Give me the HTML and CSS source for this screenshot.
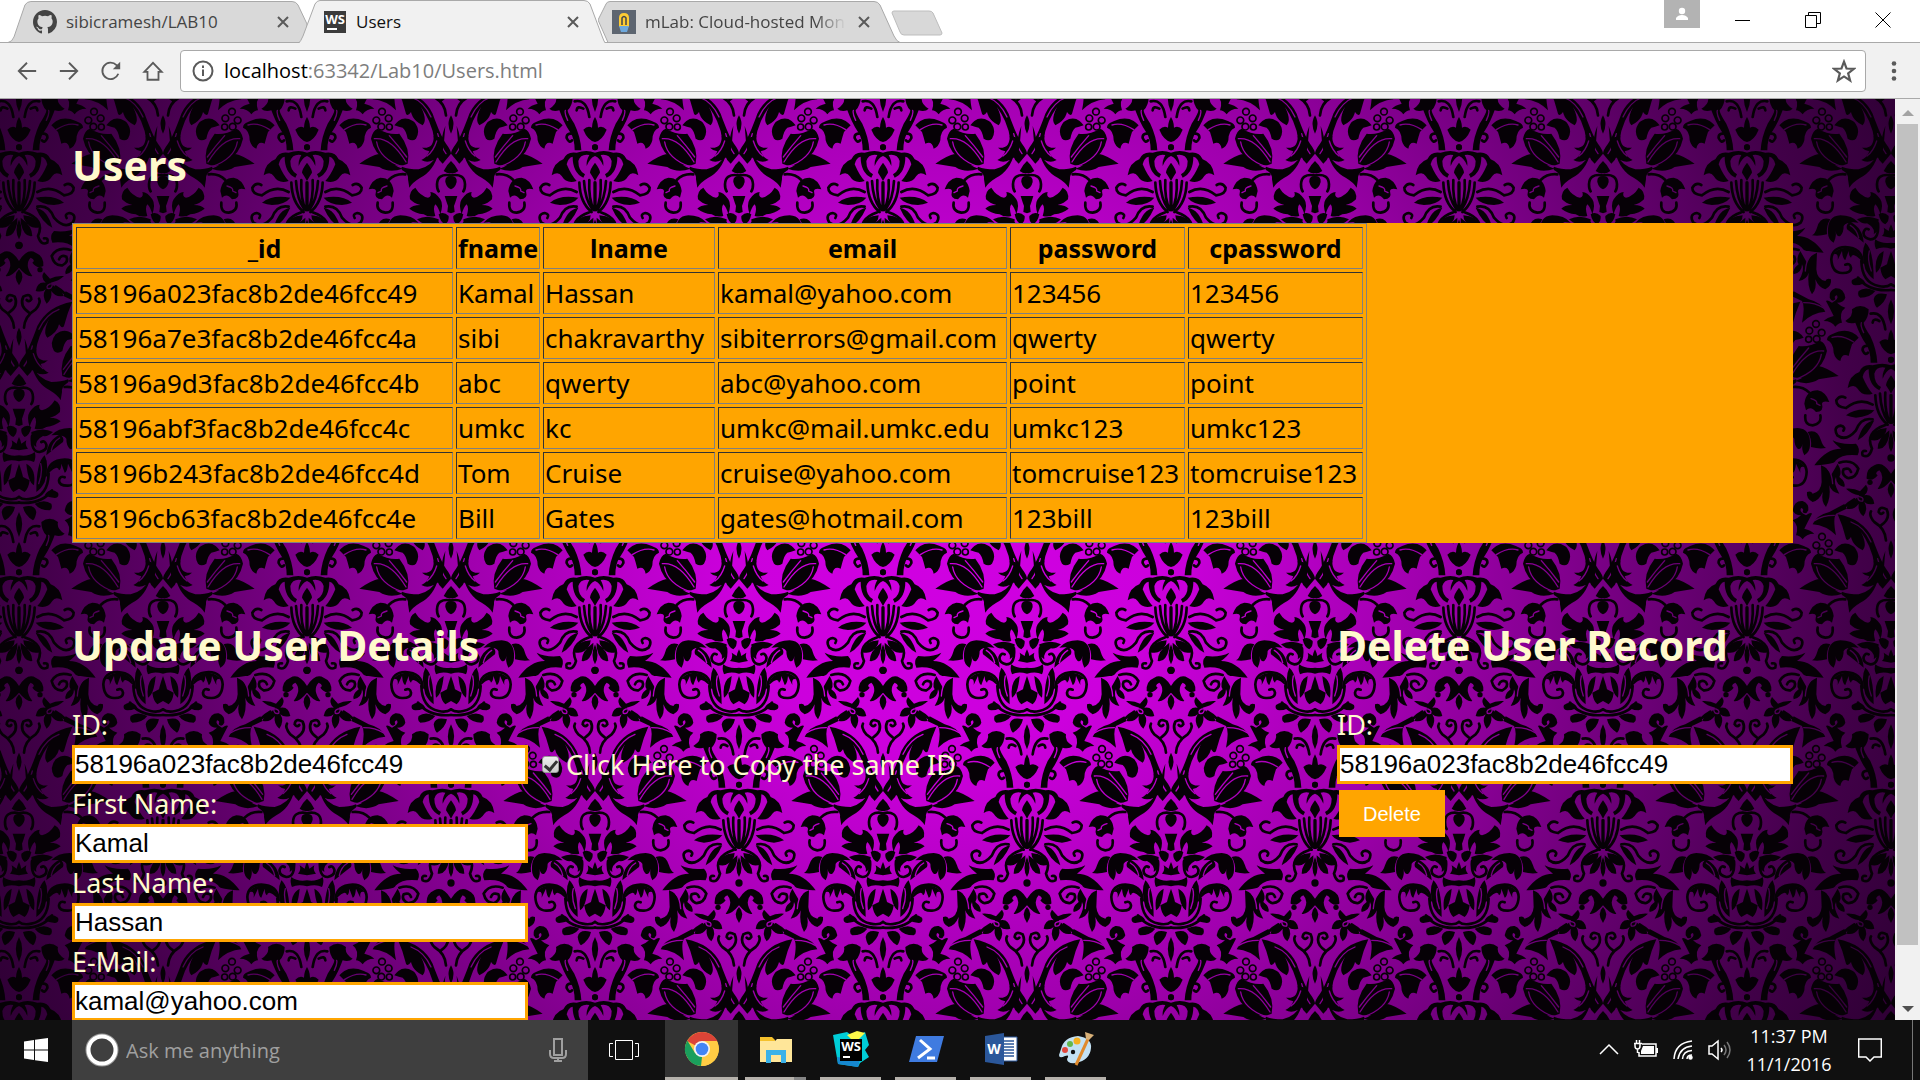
FILE: index.html
```html
<!DOCTYPE html>
<html lang="en">
<head>
<meta charset="utf-8">
<title>Users</title>
<link rel="stylesheet" href="styles.css">
</head>
<body>
<header class="tab-strip">
  <nav class="tabs" aria-label="Tabs">
    <div class="tab tab-first">
      <svg class="tab-shape" viewBox="0 0 300 43" preserveAspectRatio="none" aria-hidden="true"><path d="M0 42.500Q4 42 6 37L17 5Q19 1.500 23 1.500H285Q289 1.500 291 5L300 24V42.500Z"/></svg>
      <svg class="favicon" viewBox="0 0 16 16" aria-hidden="true"><path fill="#444" d="M8 0C3.580 0 0 3.580 0 8c0 3.540 2.290 6.530 5.470 7.590.4.070.55-.17.55-.38 0-.19-.01-.82-.01-1.490-2.010.37-2.530-.49-2.690-.94-.09-.23-.48-.94-.82-1.130-.28-.15-.68-.52-.01-.53.63-.01 1.080.58 1.230.82.72 1.210 1.870.87 2.330.66.07-.52.28-.87.51-1.070-1.780-.2-3.640-.89-3.640-3.950 0-.87.31-1.590.82-2.150-.08-.2-.36-1.020.08-2.120 0 0 .67-.21 2.200.82a7.600 7.600 0 0 1 4 0c1.530-1.040 2.200-.82 2.200-.82.44 1.100.16 1.920.08 2.120.51.56.82 1.270.82 2.150 0 3.070-1.870 3.750-3.650 3.950.29.25.54.73.54 1.480 0 1.070-.01 1.930-.01 2.200 0 .21.15.46.55.38A8 8 0 0 0 16 8c0-4.420-3.580-8-8-8z"/></svg>
      <a class="tab-title" href="#repo">sibicramesh/LAB10</a>
      <button class="tab-close" aria-label="Close tab"><svg viewBox="0 0 12 12"><path d="M1 1L11 11M11 1L1 11"/></svg></button>
    </div>
    <div class="tab tab-active">
      <svg class="tab-shape" viewBox="0 0 308 43" preserveAspectRatio="none" aria-hidden="true"><path d="M0 44Q3 41 5 36L17 4Q19 .500 22 .500H286Q290 .500 292 4L304 36Q306 42 308 44"/></svg>
      <svg class="favicon" viewBox="0 0 24 24" aria-hidden="true"><path fill="#3b3b3b" d="M1 1H23V23H1Z"/><text class="logo-text" x="12" y="14" font-size="13">WS</text><path fill="#fff" d="M4 18H14V20H4Z"/></svg>
      <a class="tab-title" href="#users">Users</a>
      <button class="tab-close" aria-label="Close tab"><svg viewBox="0 0 12 12"><path d="M1 1L11 11M11 1L1 11"/></svg></button>
    </div>
    <div class="tab tab-last">
      <svg class="tab-shape" viewBox="0 0 302 43" preserveAspectRatio="none" aria-hidden="true"><path d="M0 20L8 4Q9 1.500 12 1.500H276Q280 1.500 282 5L296 36Q299 42 302 42.500H10Z"/></svg>
      <svg class="favicon" viewBox="0 0 24 24" aria-hidden="true"><path fill="#5d6570" d="M0 0H24V24H0Z"/><path fill="#fc3" d="M7 17V8Q7 3 12 3T17 8V17Z"/><path fill="#6da8dc" d="M7 16H17L15 22H9Z"/><path fill="none" stroke="#43464c" stroke-width="1.500" d="M10 15V8Q12 5 14 8V15"/></svg>
      <a class="tab-title tab-fade" href="#mlab">mLab: Cloud-hosted Mon</a>
      <button class="tab-close" aria-label="Close tab"><svg viewBox="0 0 12 12"><path d="M1 1L11 11M11 1L1 11"/></svg></button>
    </div>
    <button class="new-tab" aria-label="New tab"><svg viewBox="0 0 52 26"><path d="M3 1H38Q41 1 42 3L51 23Q51 25 49 25H13Q10 25 9 22L1 3Q1 1 3 1Z" fill="#d8d8d8" stroke="#bdbdbd"/></svg></button>
  </nav>
  <div class="window-controls">
    <button class="profile" aria-label="Profile"><svg viewBox="0 0 14 14"><circle cx="7" cy="4" r="3.200"/><path d="M1 13V11Q3 8 7 8T13 11V13Z"/></svg></button>
    <button class="win" aria-label="Minimize"><svg viewBox="0 0 16 16"><path d="M0 8.500H15"/></svg></button>
    <button class="win" aria-label="Restore"><svg viewBox="0 0 16 16"><path d="M.500 3.500H11.500V15.500H.500ZM3.500 3V.500H15.500V11.500H12"/></svg></button>
    <button class="win" aria-label="Close"><svg viewBox="0 0 16 16"><path d="M.500.500L15.500 15.500M15.500.500L.500 15.500"/></svg></button>
  </div>
</header>
<div class="toolbar">
  <button class="tool" aria-label="Back"><svg viewBox="0 0 24 24"><path d="M22 12H3M12 3L3 12L12 21"/></svg></button>
  <button class="tool" aria-label="Forward"><svg viewBox="0 0 24 24"><path d="M2 12H21M12 3L21 12L12 21"/></svg></button>
  <button class="tool" aria-label="Reload"><svg viewBox="0 0 24 24"><path d="M20 15A9 9 0 1 1 18 5.500L21 8"/><path fill="#5a5a5a" stroke="none" d="M22 2V10H14Z"/></svg></button>
  <button class="tool" aria-label="Home"><svg viewBox="0 0 24 24"><path d="M2.500 13L12 3L21.500 13H18V21.500H6V13Z"/></svg></button>
  <div class="address">
    <svg class="info" viewBox="0 0 22 22" aria-hidden="true"><circle cx="11" cy="11" r="9.500"/><path d="M11 9.500V16M11 5.500V8"/></svg>
    <div class="url" role="textbox" aria-label="Address" contenteditable="true" spellcheck="false"><span class="host">localhost</span>:63342/Lab10/Users.html</div>
    <button class="star" aria-label="Bookmark"><svg viewBox="0 0 22 22"><path d="M11 2.500L13.300 8.700L20 9L14.800 13.200L16.600 19.700L11 16L5.400 19.700L7.200 13.200L2 9L8.700 8.700Z"/></svg></button>
  </div>
  <button class="menu" aria-label="Menu"><svg viewBox="0 0 6 20"><circle cx="3" cy="2.500" r="2.300"/><circle cx="3" cy="10" r="2.300"/><circle cx="3" cy="17.500" r="2.300"/></svg></button>
</div>

<div class="viewport">
  <main class="page">
    <svg class="damask" aria-hidden="true">
      <defs>
        <g id="half" transform="translate(-23 45)" stroke-linecap="round">
          <g stroke="none">
            <path d="M23 75Q35 85 45 105Q34 114 23 112ZM23 120Q42 120 40 138Q36 155 23 160ZM23 180L42 180Q36 200 32 210L34 228L23 232Z"/>
            <path d="M55 235Q45 205 55 190Q70 168 85 168Q80 182 92 185Q115 180 130 155Q150 165 146 190Q135 202 115 207Q140 208 148 218Q130 232 105 235Q90 245 70 240Q78 215 70 205Q60 215 55 235ZM30 240Q45 225 60 235Q55 260 40 265Q28 255 30 240Z"/>
            <path d="M60 250Q95 235 125 250Q110 265 95 262Q70 275 75 295L62 285ZM23 265Q28 275 30 285L45 275Q40 290 50 300L23 305ZM23 320Q50 325 70 310Q75 325 68 340Q50 330 23 338Z"/>
            <path d="M105 320Q108 275 145 258Q160 265 155 280Q135 295 105 320ZM120 260Q140 238 175 238Q215 240 212 290Q212 310 195 320Q185 300 190 285Q185 305 175 300Q165 290 165 270Q155 255 120 260ZM205 250Q235 240 245 275Q250 292 260 298Q240 302 215 295Q218 270 205 250Z"/>
            <path d="M110 375Q120 335 160 335Q190 340 195 355Q180 350 183 372L170 345Q168 370 160 372L150 345Q150 360 143 365Q140 345 110 375ZM23 345Q32 370 35 385L55 395Q52 420 40 430L23 420ZM45 345Q75 360 68 410Q50 400 45 345ZM75 430Q75 340 100 320Q115 350 100 400Q90 420 75 430Z"/>
            <path d="M100 440Q115 415 140 432Q145 445 130 448Q115 448 100 440ZM70 465Q100 450 120 465Q125 480 115 485Q85 485 70 465ZM35 475Q70 465 75 490Q72 510 65 515Q40 500 35 475ZM23 490Q42 525 23 565ZM23 580Q32 595 32 612Q45 605 58 618Q45 650 23 655Z"/>
            <circle cx="23" cy="671" r="9"/>
            <path d="M64 680Q66 640 85 600Q105 570 105 560Q90 545 90 520Q115 500 140 520Q135 540 160 555Q150 565 130 560Q115 600 98 625Q84 645 84 680Z"/>
            <path d="M160 485Q165 455 190 457Q210 465 207 485Q200 500 190 490Q195 480 185 478Q178 490 200 500Q215 490 218 495Q205 520 195 540Q215 545 225 555Q200 555 190 572Q180 560 170 560Q180 530 160 515Q175 510 185 500Q165 500 160 485Z"/>
            <path d="M60 50Q80 90 120 100Q150 100 170 92Q175 100 165 105Q150 115 152 130L148 155Q140 140 115 125Q75 105 60 50ZM40 -30Q48 -10 50 5L75 0Q74 40 110 35Q100 45 88 46Q95 65 112 72Q95 82 75 72Q48 60 45 30Z"/>
            <path d="M120 605Q150 570 200 595Q215 600 215 612Q195 620 195 650Q190 670 175 675Q170 650 150 660Q145 640 140 625Q130 615 120 605ZM285 605Q310 570 345 595Q365 620 350 645Q340 655 325 645Q320 620 310 612Q300 610 285 605Z"/>
            <path d="M215 645Q220 620 235 615Q270 635 300 630Q335 675 325 720Q290 735 260 710Q225 690 215 645ZM180 720Q215 695 240 690Q280 725 310 735Q270 750 240 730Z"/>
            <path d="M220 527Q230 500 270 490L315 466L322 480L290 495Q280 510 290 560Q260 530 220 527ZM295 497Q370 510 400 570Q425 640 440 660Q455 680 455 690L430 720Q405 700 405 650Q400 600 365 550Q385 590 370 605Q340 590 335 565Q325 580 320 570Q310 530 295 497Z"/>
            <path d="M455 50Q430 40 400 50Q370 45 360 70Q330 80 325 118Q345 105 355 120Q370 145 400 135Q385 120 370 85Q374 65 388 62Q388 110 420 125L425 115Q405 105 405 75Q412 52 438 57Q428 75 430 90Q440 65 455 60ZM455 80Q440 100 440 110Q450 125 455 135Z"/>
            <path d="M320 200Q350 175 405 185Q390 205 350 207Q335 205 320 200ZM405 215Q370 220 355 275Q385 260 405 215ZM442 238Q400 240 390 272Q420 285 440 250ZM450 245Q415 270 415 300Q440 305 450 260ZM455 250Q440 285 455 310Z"/>
            <circle cx="455" cy="328" r="11"/><circle cx="392" cy="401" r="8"/>
            <path d="M455 375Q430 335 405 350Q380 360 382 390Q400 400 415 380Q404 372 420 365Q440 385 415 420Q430 425 455 395ZM455 400Q435 420 455 448ZM455 575Q440 600 455 630Z"/>
            <path d="M225 350Q260 300 305 300Q285 285 280 275Q310 290 350 285Q365 300 355 320Q310 315 290 335Q285 345 270 345Q240 350 225 350ZM245 350Q270 360 275 380L295 345Q310 370 300 385Q320 400 315 415Q290 410 290 385Q280 400 300 435Q275 430 270 410Q275 450 260 475Q245 460 250 430Q240 455 220 460Q200 450 203 430Q215 425 220 435Q245 430 247 400Z"/>
            <path d="M195 165Q200 125 235 125Q260 130 270 160Q250 155 248 165Q255 190 230 190Q215 170 200 185Z"/>
            <path d="M360 440Q335 435 320 420Q345 418 362 428L380 408Q392 425 375 440Q400 435 405 465Q385 470 375 460Q388 480 372 503Q355 490 358 465Q345 485 322 480Q325 455 345 455Z"/>
          </g>
          <g fill="none" stroke="#fff" stroke-width="8">
            <path d="M25 118Q64 112 65 145Q65 160 60 166M62 262Q58 310 85 310Q108 305 105 288Q100 274 90 280M108 380Q110 335 160 333Q200 335 202 370Q200 410 170 411Q143 412 143 395Q146 380 160 386M112 375Q110 440 60 450Q35 455 23 445M23 462Q90 468 122 425M40 580Q48 525 84 533M58 555Q76 545 78 560M80 630Q110 625 108 643Q100 660 92 650"/>
            <path d="M408 140Q410 200 445 228M422 135Q425 190 447 220M438 132Q435 190 452 222M454 140L454 222M400 168Q360 145 320 178Q290 175 291 155Q302 138 318 147M400 212Q365 205 350 245Q320 280 294 260Q280 235 304 231Q320 235 312 246M440 228Q375 250 398 300Q390 330 370 320Q365 305 380 307"/>
            <path d="M300 342Q340 330 357 360Q350 390 325 388Q305 378 313 362Q330 355 335 370M440 575Q438 540 405 520Q388 500 395 488M425 530Q455 510 442 482Q420 470 418 490Q425 500 432 492M160 115Q190 112 210 132M198 200Q195 230 220 230Q248 225 243 200M315 475Q330 460 345 452"/>
            <g stroke-width="5"><circle cx="248" cy="564" r="10"/><circle cx="231" cy="590" r="10"/><circle cx="268" cy="584" r="10"/><circle cx="246" cy="609" r="10"/><circle cx="270" cy="610" r="9"/></g>
          </g>
          <g fill="none" stroke="#000" stroke-width="4">
            <path d="M225 645Q275 640 320 715M232 655Q240 705 310 730M270 636Q300 670 322 700M120 305Q125 280 145 268M225 516Q250 500 285 500M335 520Q375 535 395 580M415 630Q425 670 440 690M105 590Q115 570 112 560M135 618Q170 595 200 604M265 360Q278 375 280 405M355 443Q375 445 370 457Q355 460 355 443M215 150Q235 155 232 165L242 170M95 60Q75 45 66 15M88 345Q95 370 82 405"/>
          </g>
        </g>
        <g id="motif"><use href="#half"/><use href="#half" transform="scale(-1 1)"/></g>
        <pattern id="weave" width="864" height="1275" patternUnits="userSpaceOnUse" patternTransform="translate(163 22) scale(.33333)" fill="#fff">
          <use href="#motif" y="-1275"/><use href="#motif" x="864" y="-1275"/>
          <use href="#motif" x="432" y="-637"/>
          <use href="#motif"/><use href="#motif" x="864"/>
          <use href="#motif" x="432" y="638"/>
          <use href="#motif" y="1275"/><use href="#motif" x="864" y="1275"/>
        </pattern>
        <mask id="ink"><rect width="100%" height="100%" fill="url(#weave)"/></mask>
      </defs>
      <rect width="100%" height="100%" fill="#060106" mask="url(#ink)"/>
    </svg>
    <div class="content">
      <h1>Users</h1>
      <div class="table-panel">
        <table>
          <colgroup><col class="c-id"><col class="c-fname"><col class="c-lname"><col class="c-email"><col class="c-pass"><col class="c-pass"></colgroup>
          <thead><tr><th>_id</th><th>fname</th><th>lname</th><th>email</th><th>password</th><th>cpassword</th></tr></thead>
          <tbody>
            <tr><td>58196a023fac8b2de46fcc49</td><td>Kamal</td><td>Hassan</td><td>kamal@yahoo.com</td><td>123456</td><td>123456</td></tr>
            <tr><td>58196a7e3fac8b2de46fcc4a</td><td>sibi</td><td>chakravarthy</td><td>sibiterrors@gmail.com</td><td>qwerty</td><td>qwerty</td></tr>
            <tr><td>58196a9d3fac8b2de46fcc4b</td><td>abc</td><td>qwerty</td><td>abc@yahoo.com</td><td>point</td><td>point</td></tr>
            <tr><td>58196abf3fac8b2de46fcc4c</td><td>umkc</td><td>kc</td><td>umkc@mail.umkc.edu</td><td>umkc123</td><td>umkc123</td></tr>
            <tr><td>58196b243fac8b2de46fcc4d</td><td>Tom</td><td>Cruise</td><td>cruise@yahoo.com</td><td>tomcruise123</td><td>tomcruise123</td></tr>
            <tr><td>58196cb63fac8b2de46fcc4e</td><td>Bill</td><td>Gates</td><td>gates@hotmail.com</td><td>123bill</td><td>123bill</td></tr>
          </tbody>
        </table>
      </div>
      <div class="forms">
        <form class="form">
          <h2>Update User Details</h2>
          <label for="uid">ID:</label>
          <div class="row">
            <input class="field" id="uid" type="text" value="58196a023fac8b2de46fcc49">
            <input class="check" id="same" type="checkbox" checked><label for="same">Click Here to Copy the same ID</label>
          </div>
          <label for="first">First Name:</label>
          <input class="field" id="first" type="text" value="Kamal">
          <label for="last">Last Name:</label>
          <input class="field" id="last" type="text" value="Hassan">
          <label for="mail">E-Mail:</label>
          <input class="field" id="mail" type="text" value="kamal@yahoo.com">
        </form>
        <form class="form">
          <h2>Delete User Record</h2>
          <label for="did">ID:</label>
          <input class="field" id="did" type="text" value="58196a023fac8b2de46fcc49">
          <button class="delete" type="button">Delete</button>
        </form>
      </div>
    </div>
  </main>
  <div class="scrollbar" aria-hidden="true">
    <svg viewBox="0 0 12 6"><path fill="#a3a3a3" d="M6 0L12 6H0Z"/></svg>
    <div class="thumb"></div>
    <svg viewBox="0 0 12 6"><path fill="#505050" d="M0 0H12L6 6Z"/></svg>
  </div>
</div>

<footer class="taskbar">
  <button class="start" aria-label="Start"><svg viewBox="0 0 24 24"><path fill="#fff" d="M0 3.500L10 2V11.500H0ZM11 1.800L24 0V11.500H11ZM0 12.500H10V22L0 20.500ZM11 12.500H24V24L11 22.200Z"/></svg></button>
  <div class="search">
    <svg class="ring" viewBox="0 0 34 34" aria-hidden="true"><circle cx="17" cy="17" r="15.500" stroke="#999" stroke-width="2"/><circle cx="17" cy="17" r="13.500" stroke="#fff" stroke-width="4"/></svg>
    <input type="text" placeholder="Ask me anything" aria-label="Search">
    <svg class="mic" viewBox="0 0 18 24" aria-hidden="true"><path d="M5 1H13V17H5ZM1 12V16Q1 20 5 20H13Q17 20 17 16V12M9 20V23M5 23H13"/></svg>
  </div>
  <button class="taskview" aria-label="Task view"><svg viewBox="0 0 30 20"><path d="M6.500.500H23.500V19.500H6.500ZM4 3.500H.500V16.500H4M26 3.500H29.500V16.500H26"/></svg></button>
  <nav class="apps" aria-label="Running apps">
    <button class="app app-current" aria-label="Chrome"><svg viewBox="0 0 36 36"><circle cx="18" cy="18" r="17" fill="#fc4"/><path fill="#db4437" d="M18 18L3 10Q9 1 18 1Q28 1 33.500 10H18Z"/><path fill="#1a9f5c" d="M3.300 9.500L11 22L18 26L17 35Q7 35 2 24Q-1 17 3.300 9.500Z"/><path fill="#fc4" d="M18 10H33Q37 20 31 29Q25 35 17 35L25 22Z"/><circle cx="18" cy="18" r="8" fill="#f4f4f4"/><circle cx="18" cy="18" r="6.300" fill="#4285f4"/></svg></button>
    <button class="app app-multi" aria-label="File Explorer"><svg viewBox="0 0 36 36"><path fill="#f5c12c" d="M2 6H14L17 9V14H2Z"/><path fill="#ffe699" d="M2 10H17L19 8H34V31H2Z"/><path fill="#3bb2e8" d="M8 19H28V32H23V24H13V32H8Z"/></svg></button>
    <button class="app" aria-label="WebStorm"><svg viewBox="0 0 36 36"><path fill="#00cdd7" d="M0 4L14 1L21 6L32 1L36 14L32 19L36 26L27 32L25 36L5 33Z"/><path fill="#fcf84a" d="M14 4L24 0L32 2L22 12Z"/><path fill="#1687cf" d="M4 26L27 29L25 36L5 33Z"/><path fill="#000" d="M7 8H29V30H7Z"/><text class="logo-text" x="18" y="20" font-size="13">WS</text><path fill="#fff" d="M10 25H17V27H10Z"/></svg></button>
    <button class="app" aria-label="PowerShell"><svg viewBox="0 0 36 36"><path fill="#3f7be0" d="M8 5H36L29 31H1Z"/><path fill="none" stroke="#fff" stroke-width="3" d="M12 9L22 18L10 27M19 27H27"/></svg></button>
    <button class="app" aria-label="Word"><svg viewBox="0 0 36 36"><path fill="#fff" stroke="#2b579a" d="M18 6H34V30H18Z"/><path fill="none" stroke="#2b579a" stroke-width="1.500" d="M20 10H31M20 13H31M20 16H31M20 19H31M20 22H31M20 25H31"/><path fill="#2b579a" d="M2 5L21 2V34L2 31Z"/><text class="logo-text" x="11" y="23" font-size="14">W</text></svg></button>
    <button class="app" aria-label="Paint"><svg viewBox="0 0 36 36"><path fill="#c3e1f3" d="M3 18Q6 6 20 5Q34 7 33 17Q32 29 18 32Q9 33 9 28Q12 23 7 25Q1 28 1 24Z"/><circle cx="7" cy="19" r="3" fill="#e0483e"/><circle cx="12" cy="13" r="3" fill="#63b84c"/><circle cx="19" cy="10" r="3.500" fill="#f5b020"/><circle cx="15" cy="21" r="2.200" fill="#111"/><path fill="none" stroke="#e08a2c" stroke-width="3" d="M18 34L30 8"/><path fill="#d8b078" d="M27 1L36 4L31 9L28 8Z"/></svg></button>
  </nav>
  <div class="tray">
    <button aria-label="Hidden icons"><svg class="i20" viewBox="0 0 20 20"><path d="M1 14L10 5L19 14"/></svg></button>
    <svg class="i24" viewBox="0 0 24 24" aria-hidden="true"><path d="M8 6H22V18H5V14M1 5V8Q1 11 3.500 11T6 8V5M0 5.500H8M2.500 2V5M5.500 2V5M3.500 11V15M23.500 10V15"/><path fill="#fff" stroke="none" d="M9 8H20V16H7V13Z"/></svg>
    <svg class="i20" viewBox="0 0 20 20" aria-hidden="true"><path d="M1 19Q2 3 19 1M5 19Q7 7 19 6M9.500 19Q10 11 19 10.500M14 19Q14 15 19 15"/><circle cx="17.500" cy="17.500" r="1.500" fill="#fff"/></svg>
    <svg class="i24" viewBox="0 0 24 24" aria-hidden="true"><path d="M1 8H4L10 3V21L4 16H1ZM13 10Q15 12 13 14"/><path stroke="#777" d="M16 7Q20 12 16 17M19 4Q25 12 19 20"/></svg>
    <div class="clock"><time>11:37 PM</time><time>11/1/2016</time></div>
    <button aria-label="Action center"><svg class="i24" viewBox="0 0 24 24"><path d="M.700 1H23.300V19H16L12 23L8 19H.700Z"/></svg></button>
    <div class="peek"></div>
  </div>
</footer>
</body>
</html>
```
FILE: styles.css
```css
* { box-sizing: border-box; }
body {
  margin: 0;
  height: 100vh;
  display: flex;
  flex-direction: column;
  overflow: hidden;
  background: #fff;
  font-family: "Segoe UI", "Open Sans", sans-serif;
}
button { border: 0; padding: 0; margin: 0; background: none; font: inherit; display: flex; align-items: center; justify-content: center; }
svg { display: block; flex: none; }
.logo-text { fill: #fff; font-family: "Open Sans", sans-serif; font-weight: 700; text-anchor: middle; }

/* Browser tabs */
.tab-strip { flex: none; height: 43px; display: flex; justify-content: space-between; border-bottom: 1px solid #a9a9a9; }
.tabs { display: flex; padding-left: 8px; }
.tab { position: relative; isolation: isolate; height: 43px; display: flex; align-items: center; padding: 0 18px 0 25px; }
.tab-first { width: 299px; }
.tab-active { width: 308px; margin-left: -9px; z-index: 1; padding: 0 27px 0 25px; }
.tab-last { width: 302px; margin-left: -8px; padding: 0 30px 0 14px; }
.tab-shape { position: absolute; left: 0; top: 0; width: 100%; height: 43px; fill: #d9d9d9; stroke: #a9a9a9; z-index: -1; }
.tab-active .tab-shape { fill: #f1f1f1; }
.favicon { width: 24px; height: 24px; }
.tab-title { flex: 1; margin-left: 9px; font-size: 17px; line-height: 24px; color: #444; text-decoration: none; white-space: nowrap; overflow: hidden; }
.tab-active .tab-title { color: #111; }
.tab-fade { margin-right: 12px; -webkit-mask-image: linear-gradient(to right, #000 85%, transparent); mask-image: linear-gradient(to right, #000 85%, transparent); }
.tab-close svg { width: 12px; height: 12px; fill: none; stroke: #5a5a5a; stroke-width: 2; }
.new-tab { align-self: flex-start; margin: 10px 0 0 -9px; }
.new-tab svg { width: 52px; height: 26px; }
.window-controls { display: flex; align-items: flex-start; padding-right: 2px; }
.profile { width: 36px; height: 28px; background: #b3b3b3; }
.profile svg { width: 14px; height: 14px; fill: #fff; }
.win { width: 70px; height: 40px; }
.win svg { width: 16px; height: 16px; fill: none; stroke: #000; }
.profile + .win { margin-left: 8px; }

/* Address toolbar */
.toolbar { flex: none; height: 56px; display: flex; align-items: center; background: #f1f1f1; border-bottom: 1px solid #a9a9a9; padding: 0 18px 0 6px; }
.tool { width: 42px; height: 42px; }
.tool svg { width: 22px; height: 22px; fill: none; stroke: #5a5a5a; stroke-width: 2; }
.address { flex: 1; height: 42px; margin-left: 6px; display: flex; align-items: center; background: #fff; border: 1px solid #a9a9a9; border-radius: 4px; padding: 0 9px 0 11px; }
.info { width: 22px; height: 22px; fill: none; stroke: #5a5a5a; stroke-width: 2; }
.url { flex: 1; margin-left: 10px; font-size: 20px; line-height: 28px; color: #7d7d7d; outline: none; }
.host { color: #000; }
.star svg { width: 24px; height: 24px; fill: none; stroke: #5a5a5a; stroke-width: 2; }
.menu { margin-left: 20px; width: 16px; }
.menu svg { width: 6px; height: 20px; fill: #5a5a5a; }

/* Document */
.viewport { flex: 1; min-height: 0; display: flex; overflow: hidden; }
.page {
  flex: 1;
  min-width: 0;
  position: relative;
  overflow: hidden;
  background: radial-gradient(circle at 50% 48%, #d000e2 0%, #cc00dd 20%, #a000ae 45%, #6a0075 68%, #420049 86%, #2e0034 100%);
  color: #fffacd;
  font-family: "Comic Sans MS", "Noto Sans", sans-serif;
  font-size: 27px;
  line-height: 40px;
}
.damask { position: absolute; left: 0; top: 0; width: 100%; height: 100%; }
.content { position: relative; padding: 38px 102px 0 72px; }
h1, h2 { margin: 0; font-size: 41px; line-height: 56px; font-weight: 700; white-space: nowrap; }
.table-panel { margin-top: 30px; background: orange; color: #000; font-size: 26px; }
table { table-layout: fixed; width: 1295px; border: 1px solid gray; border-collapse: separate; border-spacing: 3px; }
th, td { height: 42px; padding: 1px; border: 1px solid; border-color: #333 gray gray #333; line-height: 38px; white-space: nowrap; text-align: left; }
th { text-align: center; font-size: 25px; }
.c-id { width: 377px; }
.c-fname { width: 84px; }
.c-lname { width: 172px; }
.c-email { width: 289px; }
.c-pass { width: 175px; }
.forms { margin-top: 74px; display: flex; justify-content: space-between; }
.form { display: flex; flex-direction: column; align-items: flex-start; }
.form h2 { margin-bottom: 32px; }
.row { display: flex; align-items: center; }
.row label { margin-left: 7px; line-height: 39px; }
.field { width: 456px; height: 39px; border: 3px solid orange; background: #fff; color: #000; padding: 0; font: 26px/33px "Liberation Sans", Arial, sans-serif; }
.check { appearance: none; width: 17px; height: 17px; margin: 0 0 0 14px; border: 1px solid #999; border-radius: 3px; background: linear-gradient(#eee, #ccc); display: grid; place-items: center; }
.check:checked::before { content: ""; width: 5px; height: 10px; border: solid #333; border-width: 0 3px 3px 0; transform: rotate(40deg); }
.delete { margin: 6px 0 0 2px; padding: 0 24px; height: 47px; background: orange; color: #fff; font: 20px/24px "Liberation Sans", Arial, sans-serif; }
.scrollbar { flex: none; width: 25px; background: #f1f1f1; display: flex; flex-direction: column; align-items: center; padding: 11px 0 8px; }
.scrollbar svg { width: 12px; height: 6px; }
.thumb { width: 21px; flex: 0 0 91%; margin: 8px 0 auto; background: #c1c1c1; }

/* Taskbar */
.taskbar { flex: none; height: 60px; display: flex; background: #101010; color: #fff; }
.start { width: 72px; }
.start svg { width: 24px; height: 24px; }
.search { width: 516px; background: #3f3f3f; display: flex; align-items: center; padding: 0 21px 0 13px; }
.ring { width: 34px; height: 34px; fill: none; }
.search input { flex: 1; min-width: 0; border: 0; padding: 2px 0 0; margin-left: 7px; background: none; color: #fff; font: 20px/28px "Segoe UI", "Open Sans", sans-serif; }
.search input::placeholder { color: #a0a0a0; opacity: 1; }
.mic { width: 18px; height: 24px; fill: none; stroke: #a0a0a0; stroke-width: 2; }
.taskview { width: 72px; }
.taskview svg { width: 30px; height: 20px; fill: none; stroke: #fff; }
.apps { display: flex; padding-left: 5px; }
.app { width: 61px; margin: 0 7px; border-bottom: 3px solid #b5b1ab; }
.app svg { width: 36px; height: 36px; }
.app-current { width: 73px; margin: 0; background: #333; }
.app-multi { border-image: linear-gradient(to right, #b5b1ab 78%, #858585 78%) 3; }
.tray { margin-left: auto; display: flex; align-items: center; gap: 15px; }
.tray svg { fill: none; stroke: #fff; stroke-width: 1.5; }
.i20 { width: 20px; height: 20px; }
.i24 { width: 24px; height: 24px; }
.clock { display: flex; flex-direction: column; align-items: center; width: 84px; font-size: 18px; line-height: 28px; }
.tray .clock + button { margin-left: 12px; }
.peek { width: 8px; height: 60px; margin-left: 15px; border-left: 1px solid #777; }
```
